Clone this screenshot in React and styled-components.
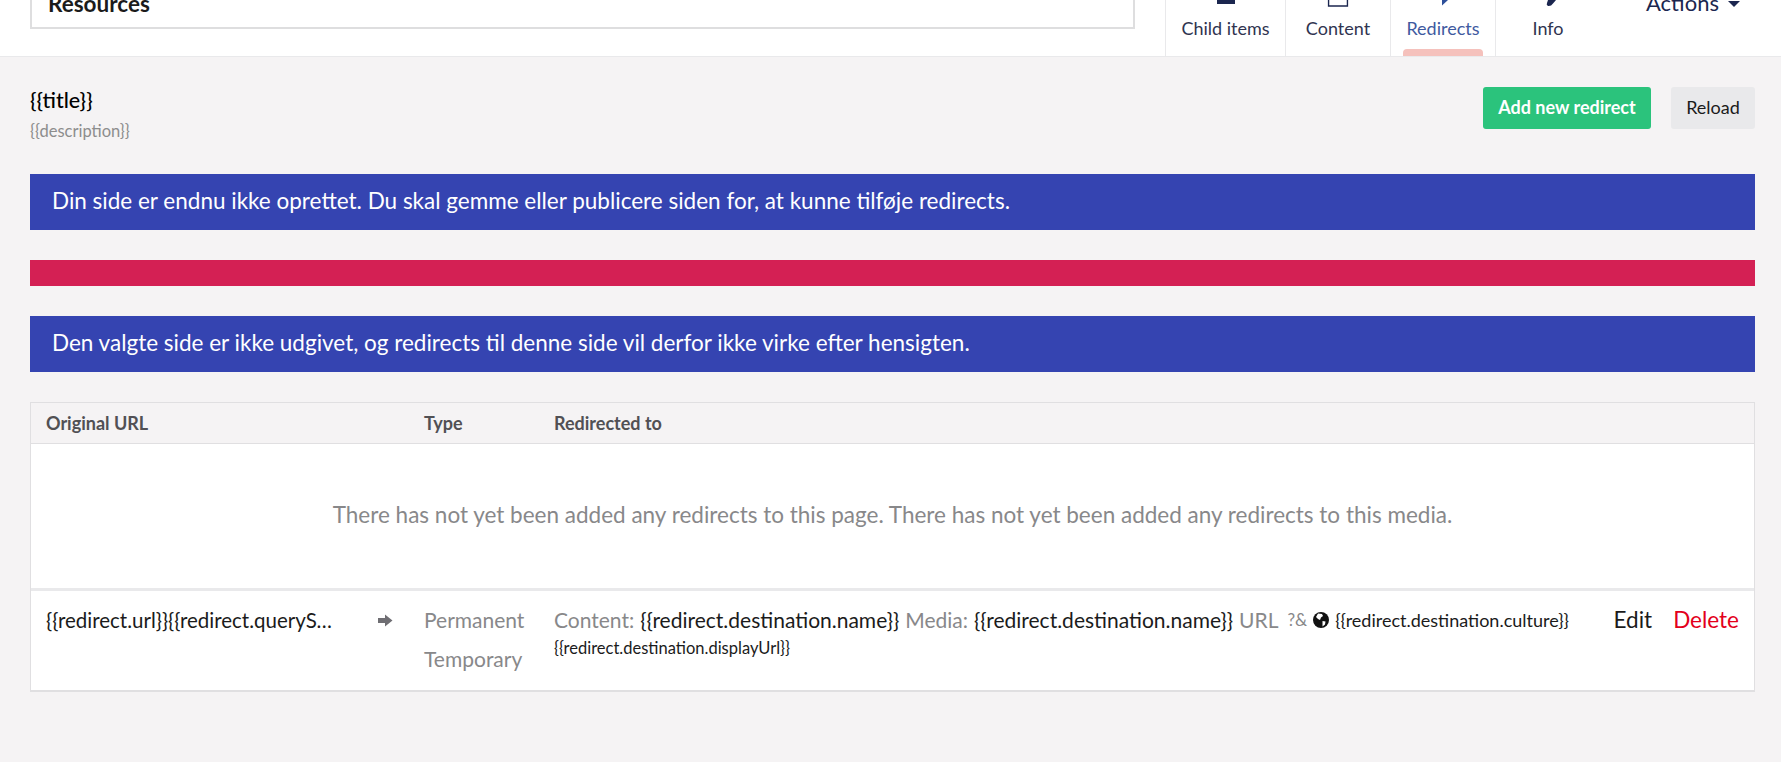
import React from "react";
import styled, { createGlobalStyle } from "styled-components";

const Global = createGlobalStyle`
  html, body {
    margin: 0;
    padding: 0;
    background: #f5f3f4;
    font-family: Lato, "Open Sans", sans-serif;
    color: #000;
    overflow: hidden;
  }
  * { box-sizing: border-box; }
`;

const Page = styled.div`
  width: 1781px;
  height: 762px;
  display: flex;
  flex-direction: column;
`;

const Header = styled.header`
  height: 57px;
  flex: none;
  display: flex;
  align-items: flex-start;
  justify-content: space-between;
  padding-left: 30px;
  background: #fff;
  border-bottom: 1px solid #e9e9eb;
  overflow: hidden;
`;

const NameBox = styled.div`
  width: 1105px;
  height: 29px;
  display: flex;
  align-items: flex-end;
  padding: 0 16px 11px;
  border: 2px solid #dededf;
  border-top: 0;
  font-size: 22.5px;
  font-weight: 700;
  line-height: 24px;
  color: #1b1b1b;
`;

const Tabs = styled.nav`
  display: flex;
  height: 56px;
`;

const Tab = styled.div`
  position: relative;
  width: ${({ $w }) => $w}px;
  height: 56px;
  display: flex;
  flex-direction: column;
  align-items: center;
  padding-top: 18px;
  border-left: 1px solid #e9e9eb;
  font-size: 18px;
  line-height: 20px;
  color: ${({ $active }) => ($active ? "#3f5a9f" : "#303450")};
  &:last-of-type { border-right: 1px solid #e9e9eb; }
`;

const TabMark = styled.span`
  position: absolute;
  left: 50%;
  top: 0;
  transform: translateX(-50%);
  color: ${({ $active }) => ($active ? "#2d4f9a" : "#1b264f")};
  line-height: 0;
`;

const TabUnderline = styled.span`
  position: absolute;
  left: 12px;
  right: 12px;
  bottom: 0;
  height: 7px;
  background: #f5c1bc;
  border-radius: 4px 4px 0 0;
`;

const Actions = styled.div`
  width: 181px;
  padding-left: 46px;
  display: flex;
  align-items: flex-start;
  gap: 9px;
  font-size: 22px;
  line-height: 22px;
  color: #1b264f;
  margin-top: -8px;
`;

const Caret = styled.span`
  width: 0;
  height: 0;
  margin-top: 9px;
  border-left: 6px solid transparent;
  border-right: 6px solid transparent;
  border-top: 6px solid #1b264f;
`;

const Main = styled.main`
  padding: 30px 26px 0 30px;
  display: flex;
  flex-direction: column;
`;

const TitleRow = styled.div`
  display: flex;
  justify-content: space-between;
  align-items: flex-start;
  height: 87px;
`;

const Title = styled.div`
  font-size: 21.5px;
  font-weight: 500;
  line-height: 24px;
  margin-top: 1px;
`;

const Description = styled.div`
  font-size: 16.5px;
  line-height: 20px;
  color: #8d8d8d;
  margin-top: 9px;
`;

const Buttons = styled.div`
  display: flex;
  gap: 20px;
`;

const Button = styled.button`
  width: ${({ $primary }) => ($primary ? 168 : 84)}px;
  height: 42px;
  padding: 0 0 3px;
  border: 0;
  border-radius: 3px;
  font: ${({ $primary }) => ($primary ? 700 : 400)} 18px Lato, sans-serif;
  color: ${({ $primary }) => ($primary ? "#fff" : "#1b1b1b")};
  background: ${({ $primary }) => ($primary ? "#2bc37c" : "#e9e9eb")};
`;

const Alert = styled.div`
  min-height: ${({ $empty }) => ($empty ? 26 : 56)}px;
  margin-bottom: 30px;
  padding: 0 22px 3px;
  display: flex;
  align-items: center;
  font-size: 22.5px;
  color: #fff;
  background: ${({ $empty }) => ($empty ? "#d42054" : "#3544b1")};
`;

const Table = styled.section`
  border: 1px solid #e0dfe1;
  border-bottom-width: 2px;
`;

const TableHead = styled.div`
  height: 41px;
  display: flex;
  align-items: center;
  padding-left: 15px;
  font-size: 18px;
  font-weight: 700;
  color: #515054;
  border-bottom: 1px solid #e0dfe1;
`;

const HeadCell = styled.div`
  width: ${({ $w }) => $w}px;
`;

const Empty = styled.div`
  height: 147px;
  display: flex;
  align-items: center;
  justify-content: center;
  padding-bottom: 3px;
  background: #fff;
  font-size: 22.5px;
  color: #88888a;
  border-bottom: 3px solid #e9e9eb;
`;

const Row = styled.div`
  height: 99px;
  display: flex;
  align-items: flex-start;
  padding: 14px 15px 0;
  background: #fff;
  line-height: 30px;
`;

const UrlCell = styled.div`
  width: 292px;
  flex: none;
  white-space: nowrap;
  overflow: hidden;
  text-overflow: ellipsis;
  font-size: 20.5px;
  color: #1b1b1b;
`;

const ArrowCell = styled.div`
  width: 86px;
  flex: none;
  padding: 9px 0 0 40px;
  color: #6f6e73;
  line-height: 0;
`;

const TypeCell = styled.div`
  width: 130px;
  flex: none;
  color: #88888a;
  font-size: 21px;
`;

const TypeLine = styled.div`
  height: 39px;
`;

const DestCell = styled.div`
  flex: 1;
  min-width: 0;
  font-size: 21px;
`;

const DestLine = styled.div`
  display: flex;
  align-items: center;
  gap: 6px;
`;

const Label = styled.span`
  color: #88888a;
`;

const Value = styled.span`
  color: #1b1b1b;
`;

const Small = styled.span`
  font-size: 18px;
  color: #1b1b1b;
`;

const Hint = styled.span`
  font-size: 17px;
  color: #88888a;
  margin-left: 3px;
`;

const Globe = styled.svg`
  width: 16px;
  height: 16px;
  flex: none;
`;

const DisplayUrl = styled.div`
  font-size: 16.5px;
  line-height: 22px;
  color: #1b1b1b;
  margin-top: 2px;
`;

const RowActions = styled.div`
  display: flex;
  gap: 21px;
  font-size: 22.5px;
  flex: none;
`;

const RowAction = styled.span`
  color: ${({ $danger }) => ($danger ? "#e3001b" : "#1b1b1b")};
`;

const tabs = [
  { label: "Child items", w: 120, mark: <svg width="18" height="5" style={{ display: "block" }}><rect width="18" height="4" fill="currentColor" /></svg> },
  { label: "Content", w: 105, mark: <svg width="21" height="7" style={{ display: "block" }}><path d="M1 0v6h19V0" fill="none" stroke="currentColor" strokeWidth="1.5" /></svg> },
  { label: "Redirects", w: 105, active: true, mark: <svg width="14" height="6" style={{ display: "block" }}><path d="M6 5.5V0h6z" fill="currentColor" /></svg> },
  { label: "Info", w: 105, mark: <svg width="20" height="7" style={{ display: "block" }}><path d="M10 0h8l-3 3.5Q13 6.5 10 6q-2-1-1-3z" fill="currentColor" /></svg> }
];

export default function App() {
  return (
    <Page>
      <Global />
      <Header>
        <NameBox>Resources</NameBox>
        <Tabs>
          {tabs.map(t => (
            <Tab key={t.label} $w={t.w} $active={t.active}>
              <TabMark $active={t.active}>{t.mark}</TabMark>
              {t.label}
              {t.active && <TabUnderline />}
            </Tab>
          ))}
          <Actions>
            Actions
            <Caret />
          </Actions>
        </Tabs>
      </Header>
      <Main>
        <TitleRow>
          <div>
            <Title>{"{{title}}"}</Title>
            <Description>{"{{description}}"}</Description>
          </div>
          <Buttons>
            <Button $primary>Add new redirect</Button>
            <Button>Reload</Button>
          </Buttons>
        </TitleRow>
        <Alert>Din side er endnu ikke oprettet. Du skal gemme eller publicere siden for, at kunne tilføje redirects.</Alert>
        <Alert $empty />
        <Alert>Den valgte side er ikke udgivet, og redirects til denne side vil derfor ikke virke efter hensigten.</Alert>
        <Table>
          <TableHead>
            <HeadCell $w={378}>Original URL</HeadCell>
            <HeadCell $w={130}>Type</HeadCell>
            <HeadCell>Redirected to</HeadCell>
          </TableHead>
          <Empty>There has not yet been added any redirects to this page. There has not yet been added any redirects to this media.</Empty>
          <Row>
            <UrlCell>{"{{redirect.url}}{{redirect.queryString}}"}</UrlCell>
            <ArrowCell>
              <svg width="15" height="13" viewBox="0 0 15 13"><path d="M0 4h7V0.5l7.5 6L7 12.5V9H0z" fill="currentColor" /></svg>
            </ArrowCell>
            <TypeCell>
              <TypeLine>Permanent</TypeLine>
              <TypeLine>Temporary</TypeLine>
            </TypeCell>
            <DestCell>
              <DestLine>
                <Label>Content:</Label>
                <Value>{"{{redirect.destination.name}}"}</Value>
                <Label>Media:</Label>
                <Value>{"{{redirect.destination.name}}"}</Value>
                <Label>URL</Label>
                <Hint>?&amp;</Hint>
                <Globe viewBox="0 0 16 16">
                  <circle cx="8" cy="8" r="8" fill="#111" />
                  <path d="M5 1.5l4 .5 1 2-2 1.5-1 2.5-2-1-2-2zM9.5 9l3 .5-.5 3-2.5 2z" fill="#fff" />
                </Globe>
                <Small>{"{{redirect.destination.culture}}"}</Small>
              </DestLine>
              <DisplayUrl>{"{{redirect.destination.displayUrl}}"}</DisplayUrl>
            </DestCell>
            <RowActions>
              <RowAction>Edit</RowAction>
              <RowAction $danger>Delete</RowAction>
            </RowActions>
          </Row>
        </Table>
      </Main>
    </Page>
  );
}
